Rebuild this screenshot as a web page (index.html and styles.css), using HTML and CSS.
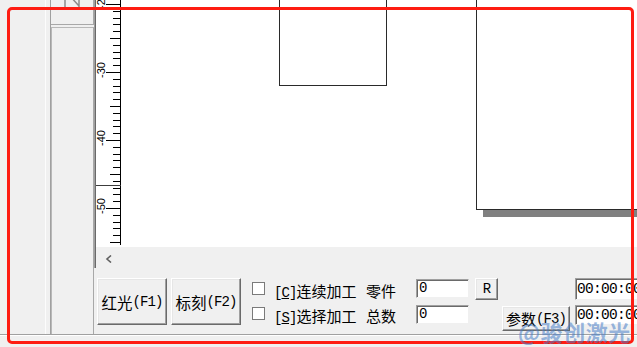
FILE: index.html
```html
<!DOCTYPE html>
<html lang="zh">
<head>
<meta charset="utf-8">
<link rel="stylesheet" href="styles.css">
</head>
<body>
<div class="window">
  <div class="main">
    <div class="gutter"></div>
    <div class="toolpanel">
      <div class="toolbox toolbox-top">
        <svg class="tool-icon" width="22" height="10" viewBox="0 0 22 10">
          <path d="M2 -2 L2 8 L7 8 M7 -4 L16 6 M16 -4 L16 8 L20 8" fill="none" stroke="#8c8c8c" stroke-width="1.5"/>
        </svg>
      </div>
      <div class="toolbox toolbox-list"></div>
    </div>
    <div class="work">
      <div class="view">
        <div class="canvas">
          <svg class="ruler" width="25" height="247" viewBox="0 0 25 247">
            <rect x="24" y="0" width="1" height="245" fill="#000"/>
            <path fill="none" stroke="#000" stroke-width="1" d="
              M10 4.5H24
              M17 11.5H24 M17 18.5H24 M17 24.5H24 M17 31.5H24
              M14 38.5H24
              M17 45.5H24 M17 52.5H24 M17 58.5H24 M17 65.5H24
              M10 72.5H24
              M17 79.5H24 M17 86.5H24 M17 92.5H24 M17 99.5H24
              M14 106.5H24
              M17 113.5H24 M17 120.5H24 M17 126.5H24 M17 133.5H24
              M10 140.5H24
              M17 147.5H24 M17 154.5H24 M17 160.5H24 M17 167.5H24
              M14 174.5H24
              M17 181.5H24 M17 188.5H24 M17 194.5H24 M17 201.5H24
              M10 208.5H24
              M17 215.5H24 M17 222.5H24 M17 228.5H24 M17 235.5H24
              M14 242.5H24"/>
            <path d="M0 185.5H25" stroke="#3c3c3c" stroke-width="1"/>
            <text class="ruler-label" transform="translate(9 9) rotate(-90)">-20</text>
            <text class="ruler-label" transform="translate(9 78) rotate(-90)">-30</text>
            <text class="ruler-label" transform="translate(9 146) rotate(-90)">-40</text>
            <text class="ruler-label" transform="translate(9 214) rotate(-90)">-50</text>
          </svg>
          <div class="drawing">
            <div class="shape shape-a"></div>
            <div class="shape shape-b"></div>
          </div>
        </div>
        <div class="hscroll">
          <svg class="scroll-arrow" width="8" height="8" viewBox="0 0 8 8">
            <path d="M6 0.5 L2 4 L6 7.5" fill="none" stroke="#606060" stroke-width="1.6"/>
          </svg>
        </div>
      </div>
      <div class="controls">
        <button class="btn btn-big">红光<span class="lat">(F1)</span></button>
        <button class="btn btn-big">标刻<span class="lat">(F2)</span></button>
        <div class="options">
          <span class="check r1"></span>
          <span class="opt-label r1"><span class="lat">[<u>C</u>]</span>连续加工</span>
          <span class="field-label r1">零件</span>
          <span class="field lat r1">0</span>
          <button class="btn btn-r r1"><span class="lat">R</span></button>
          <span class="time lat r1">00:00:00</span>

          <span class="check r2"></span>
          <span class="opt-label r2"><span class="lat">[<u>S</u>]</span>选择加工</span>
          <span class="field-label r2">总数</span>
          <span class="field lat r2">0</span>
          <button class="btn btn-param r2">参数<span class="lat">(F3)</span></button>
          <span class="time lat r2">00:00:00</span>
        </div>
      </div>
    </div>
  </div>
  <div class="status"></div>
</div>
<div class="redframe"></div>
<div class="watermark">@骏创激光</div>
</body>
</html>
```
FILE: styles.css
```css
html, body {
  margin: 0;
  padding: 0;
}
body {
  width: 637px;
  height: 347px;
  overflow: hidden;
  position: relative;
  background: #f0f0f0;
  font-family: "Noto Sans CJK SC", "Liberation Sans", sans-serif;
  font-size: 15px;
  color: #000;
}
.lat {
  font-family: "Liberation Mono", monospace;
  font-size: 14px;
  letter-spacing: -0.9px;
}
.window {
  display: flex;
  flex-direction: column;
  height: 347px;
}
.main {
  display: flex;
  height: 334px;
}
.gutter {
  width: 45px;
  border-right: 1px solid #fcfcfc;
  flex: none;
}
.toolpanel {
  margin-left: 4px;
  width: 43px;
  border-left: 1px solid #a0a0a0;
  display: flex;
  flex-direction: column;
  flex: none;
}
.toolbox {
  box-sizing: border-box;
  border-right: 1px solid #a8a8a8;
}
.toolbox-top {
  height: 25px;
  border-bottom: 1px solid #a8a8a8;
}
.tool-icon {
  display: block;
  margin-left: 12px;
}
.toolbox-list {
  flex: 1;
  margin-top: 2px;
  border-top: 1px solid #b8b8b8;
  border-left: 1px solid #b8b8b8;
}
.work {
  flex: 1;
  display: flex;
  flex-direction: column;
  min-width: 0;
}
.view {
  border-left: 1px solid #a0a0a0;
}
.canvas {
  height: 247px;
  display: flex;
  background: #fff;
  border-left: 1px solid #6a6a6a;
}
.ruler {
  display: block;
  flex: none;
}
.ruler-label {
  font-family: "Liberation Sans", sans-serif;
  font-size: 11px;
  fill: #000;
}
.drawing {
  flex: 1;
  position: relative;
  overflow: hidden;
}
.shape {
  position: absolute;
  box-sizing: border-box;
  border: 1px solid #2a2a2a;
  background: #fff;
}
.shape-a {
  left: 158px;
  top: -20px;
  width: 108px;
  height: 106px;
}
.shape-b {
  left: 355px;
  top: -20px;
  width: 320px;
  height: 230px;
  box-shadow: 7px 7px 0 0 #808080;
}
.hscroll {
  height: 21px;
  border-left: 1px solid #6a6a6a;
  display: flex;
  align-items: center;
}
.scroll-arrow {
  display: block;
  margin-left: 9px;
  margin-top: 2px;
}
.controls {
  flex: 1;
  display: flex;
  align-items: flex-start;
  padding: 10px 0 0 3px;
}
.btn {
  font: inherit;
  color: #000;
  background: #f0f0f0;
  border: 1px solid;
  border-color: #fff #6a6a6a #6a6a6a #fff;
  box-shadow: inset -1px -1px 0 #a0a0a0, inset 1px 1px 0 #e6e6e6;
  padding: 0;
  margin: 0;
  display: flex;
  align-items: center;
  justify-content: center;
  white-space: nowrap;
}
.btn-big {
  width: 70px;
  height: 47px;
  margin-right: 4px;
  flex: none;
  font-size: 15.5px;
}
.options {
  margin-left: 7px;
  display: grid;
  grid-template-columns: 22px 92px 50px 59px 27px 73px 70px;
  grid-template-rows: 25px 28px;
  align-items: start;
}
.r1 { grid-row: 1; }
.r2 { grid-row: 2; }
.check {
  grid-column: 1;
  width: 13px;
  height: 13px;
  box-sizing: border-box;
  background: #fff;
  border: 1px solid #7a7a7a;
  margin-top: 4px;
}
.opt-label {
  grid-column: 2;
  line-height: 25px;
  white-space: nowrap;
}
.field-label {
  grid-column: 3;
  line-height: 25px;
  white-space: nowrap;
}
.field {
  grid-column: 4;
  width: 53px;
  height: 19px;
  box-sizing: border-box;
  background: #fff;
  border: 1px solid;
  border-color: #a0a0a0 #f0f0f0 #f0f0f0 #a0a0a0;
  box-shadow: inset 1px 1px 0 #6a6a6a;
  line-height: 17px;
  padding-left: 2px;
}
.field.r1 { margin-top: 1px; }
.field.r2 { margin-top: 2px; }
.btn-r {
  grid-column: 5;
  width: 23px;
  height: 22px;
}
.btn-param {
  grid-column: 6;
  width: 68px;
  height: 25px;
  margin-top: 3px;
}
.time {
  grid-column: 7;
  height: 22px;
  width: 70px;
  box-sizing: border-box;
  background: #fff;
  border: 1px solid;
  border-color: #a0a0a0 #f0f0f0 #f0f0f0 #a0a0a0;
  box-shadow: inset 1px 1px 0 #6a6a6a;
  line-height: 20px;
  padding-left: 1px;
  white-space: nowrap;
  font-size: 14.5px;
  letter-spacing: -0.7px;
}
.time.r2 {
  margin-top: 2px;
  height: 20px;
  line-height: 18px;
}
.status {
  flex: 1;
  border-top: 1px solid #a0a0a0;
  box-shadow: inset 0 1px 0 #fff;
}
.redframe {
  position: absolute;
  left: 7px;
  top: 7px;
  width: 627px;
  height: 337px;
  box-sizing: border-box;
  border: 3px solid #fe1c12;
  border-radius: 5px;
  pointer-events: none;
}
.watermark {
  position: absolute;
  left: 518px;
  top: 316px;
  font-family: "Noto Sans CJK SC", sans-serif;
  font-weight: bold;
  font-size: 22px;
  line-height: 30px;
  color: rgba(70, 125, 200, 0.55);
  white-space: nowrap;
  letter-spacing: 0.5px;
}
```
